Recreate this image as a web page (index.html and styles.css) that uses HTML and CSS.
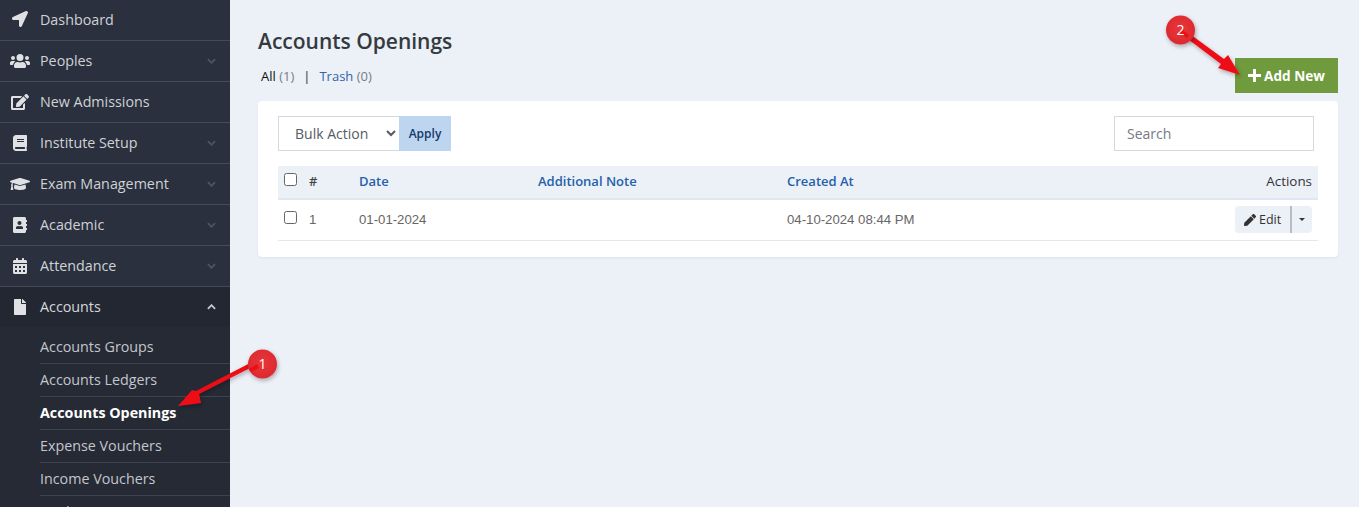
FILE: index.html
```html
<!DOCTYPE html>
<html lang="en">
<head>
<meta charset="utf-8">
<title>Accounts Openings</title>
<link rel="stylesheet" href="styles.css">
</head>
<body>
<div class="app">
  <aside class="sidebar">
    <a class="nav-item"><svg class="ico" viewBox="0 0 512 512"><path d="M444.52 3.52 28.74 195.42c-47.97 22.39-31.98 92.75 19.19 92.75h175.91v175.91c0 51.17 70.36 67.17 92.75 19.19l191.9-415.78c15.99-38.39-25.59-79.97-63.97-63.97z"/></svg><span class="nav-label">Dashboard</span></a>
    <a class="nav-item"><svg class="ico ico-wide" viewBox="0 0 640 512"><path d="M96 224a64 64 0 1 0 0-128 64 64 0 0 0 0 128zm448 0a64 64 0 1 0 0-128 64 64 0 0 0 0 128zm32 32h-64c-17.600 0-33.500 7.100-45.100 18.600 40.300 22.100 68.900 62 75.100 109.400h66c17.700 0 32-14.300 32-32v-32c0-35.300-28.700-64-64-64zm-256 0a112 112 0 1 0 0-224 112 112 0 0 0 0 224zm76.800 32h-8.300c-20.800 10-43.900 16-68.500 16s-47.600-6-68.500-16h-8.300C179.600 288 128 339.600 128 403.200V432c0 26.500 21.500 48 48 48h288c26.500 0 48-21.500 48-48v-28.800c0-63.600-51.600-115.200-115.200-115.200zm-223.700-13.400C161.500 263.100 145.600 256 128 256H64c-35.300 0-64 28.700-64 64v32c0 17.700 14.300 32 32 32h65.900c6.300-47.400 34.900-87.300 75.200-109.400z"/></svg><span class="nav-label">Peoples</span><svg class="chev" viewBox="0 0 10 6"><path d="M1 1l4 4 4-4"/></svg></a>
    <a class="nav-item"><svg class="ico ico-wide" viewBox="0 0 576 512"><path d="m402.600 83.200 90.200 90.200c3.800 3.800 3.800 10 0 13.800L274.400 405.600l-92.800 10.300c-12.400 1.400-22.900-9.100-21.500-21.500l10.300-92.800L388.800 83.200c3.800-3.800 10-3.800 13.800 0zm162-22.900-48.800-48.800c-15.200-15.200-39.900-15.200-55.200 0l-35.400 35.400c-3.800 3.800-3.800 10 0 13.800l90.200 90.200c3.800 3.800 10 3.800 13.800 0l35.400-35.400c15.200-15.300 15.200-40 0-55.200zM384 346.200V448H64V128h229.800c3.200 0 6.200-1.300 8.500-3.500l40-40c7.600-7.600 2.200-20.500-8.500-20.500H48C21.500 64 0 85.500 0 112v352c0 26.500 21.500 48 48 48h352c26.500 0 48-21.500 48-48V306.200c0-10.700-12.900-16-20.500-8.500l-40 40c-2.200 2.300-3.500 5.300-3.500 8.500z"/></svg><span class="nav-label">New Admissions</span></a>
    <a class="nav-item"><svg class="ico" viewBox="0 0 448 512"><path d="M448 360V24c0-13.300-10.700-24-24-24H96C43 0 0 43 0 96v320c0 53 43 96 96 96h328c13.300 0 24-10.700 24-24v-16c0-7.500-3.500-14.300-8.900-18.700-4.200-15.400-4.200-59.300 0-74.700 5.400-4.300 8.900-11.100 8.900-18.600zM128 134c0-3.300 2.700-6 6-6h212c3.300 0 6 2.700 6 6v20c0 3.300-2.700 6-6 6H134c-3.300 0-6-2.700-6-6v-20zm0 64c0-3.300 2.700-6 6-6h212c3.300 0 6 2.700 6 6v20c0 3.300-2.700 6-6 6H134c-3.300 0-6-2.700-6-6v-20zm253.400 250H96c-17.700 0-32-14.300-32-32 0-17.600 14.400-32 32-32h285.400c-1.900 17.100-1.900 46.900 0 64z"/></svg><span class="nav-label">Institute Setup</span><svg class="chev" viewBox="0 0 10 6"><path d="M1 1l4 4 4-4"/></svg></a>
    <a class="nav-item"><svg class="ico ico-wide" viewBox="0 0 640 512"><path d="M622.340 153.200 343.400 67.500c-15.200-4.670-31.600-4.670-46.790 0L17.660 153.200c-23.540 7.230-23.540 38.360 0 45.590l48.630 14.940c-10.670 13.190-17.230 29.280-17.880 46.900C38.780 266.150 32 276.110 32 288c0 10.780 5.680 19.850 13.860 25.650L20.330 428.530C18.110 438.520 25.710 448 35.940 448h56.110c10.240 0 17.840-9.480 15.620-19.470L82.140 313.650C90.320 307.850 96 298.780 96 288c0-11.570-6.470-21.250-15.660-26.870.76-15.020 8.440-28.300 20.690-36.720L296.600 284.500c9.060 2.780 26.440 6.250 46.790 0l278.950-85.700c23.550-7.240 23.550-38.370 0-45.600zM352.790 315.090c-28.530 8.760-52.840 3.920-65.590 0l-145.020-44.550L128 384c0 35.350 85.960 64 192 64s192-28.650 192-64l-14.180-113.470-145.030 44.560z"/></svg><span class="nav-label">Exam Management</span><svg class="chev" viewBox="0 0 10 6"><path d="M1 1l4 4 4-4"/></svg></a>
    <a class="nav-item"><svg class="ico" viewBox="0 0 448 512"><path d="M436 160c6.600 0 12-5.400 12-12v-40c0-6.600-5.400-12-12-12h-20V48c0-26.500-21.500-48-48-48H48C21.500 0 0 21.500 0 48v416c0 26.500 21.500 48 48 48h320c26.500 0 48-21.500 48-48v-48h20c6.600 0 12-5.400 12-12v-40c0-6.600-5.400-12-12-12h-20v-64h20c6.600 0 12-5.400 12-12v-40c0-6.600-5.400-12-12-12h-20v-64h20zm-228-32c35.300 0 64 28.700 64 64s-28.700 64-64 64-64-28.700-64-64 28.700-64 64-64zm112 236.800c0 10.600-10 19.200-22.400 19.200H118.400C106 384 96 375.400 96 364.800v-19.200c0-31.800 30.100-57.600 67.200-57.600h5c12.300 5.100 25.700 8 39.800 8s27.600-2.900 39.800-8h5c37.100 0 67.200 25.800 67.200 57.600v19.200z"/></svg><span class="nav-label">Academic</span><svg class="chev" viewBox="0 0 10 6"><path d="M1 1l4 4 4-4"/></svg></a>
    <a class="nav-item"><svg class="ico" viewBox="0 0 448 512"><path d="M0 464c0 26.500 21.500 48 48 48h352c26.500 0 48-21.500 48-48V192H0v272zm320-196c0-6.600 5.400-12 12-12h40c6.600 0 12 5.400 12 12v40c0 6.600-5.400 12-12 12h-40c-6.600 0-12-5.400-12-12v-40zm0 128c0-6.600 5.400-12 12-12h40c6.600 0 12 5.400 12 12v40c0 6.600-5.400 12-12 12h-40c-6.600 0-12-5.400-12-12v-40zM192 268c0-6.600 5.400-12 12-12h40c6.600 0 12 5.400 12 12v40c0 6.600-5.400 12-12 12h-40c-6.600 0-12-5.400-12-12v-40zm0 128c0-6.600 5.400-12 12-12h40c6.600 0 12 5.400 12 12v40c0 6.600-5.400 12-12 12h-40c-6.600 0-12-5.400-12-12v-40zM64 268c0-6.600 5.400-12 12-12h40c6.600 0 12 5.400 12 12v40c0 6.600-5.400 12-12 12H76c-6.600 0-12-5.400-12-12v-40zm0 128c0-6.600 5.400-12 12-12h40c6.600 0 12 5.400 12 12v40c0 6.600-5.400 12-12 12H76c-6.600 0-12-5.400-12-12v-40zM400 64h-48V16c0-8.800-7.200-16-16-16h-32c-8.800 0-16 7.200-16 16v48H160V16c0-8.800-7.200-16-16-16h-32c-8.800 0-16 7.200-16 16v48H48C21.500 64 0 85.500 0 112v48h448v-48c0-26.500-21.500-48-48-48z"/></svg><span class="nav-label">Attendance</span><svg class="chev" viewBox="0 0 10 6"><path d="M1 1l4 4 4-4"/></svg></a>
    <a class="nav-item nav-open"><svg class="ico" viewBox="0 0 384 512"><path d="M224 136V0H24C10.700 0 0 10.700 0 24v464c0 13.300 10.700 24 24 24h336c13.300 0 24-10.700 24-24V160H248c-13.200 0-24-10.800-24-24zm160-14.100v6.100H256V0h6.100c6.400 0 12.500 2.500 17 7l97.900 98c4.500 4.500 7 10.600 7 16.900z"/></svg><span class="nav-label">Accounts</span><svg class="chev" viewBox="0 0 10 6"><path d="M1 5l4-4 4 4"/></svg></a>
    <div class="submenu">
      <a class="sub-item">Accounts Groups</a>
      <a class="sub-item">Accounts Ledgers</a>
      <a class="sub-item sub-active">Accounts Openings</a>
      <a class="sub-item">Expense Vouchers</a>
      <a class="sub-item">Income Vouchers</a>
      <a class="sub-item">Bank Payments</a>
    </div>
  </aside>
  <main class="content">
    <div class="page-head">
      <div>
        <h1 class="title">Accounts Openings</h1>
        <div class="filters"><span class="f-all">All</span> <span class="count">(1)</span><span class="pipe">|</span><a class="link">Trash</a> <span class="count">(0)</span></div>
      </div>
      <a class="add-btn"><svg class="plus" viewBox="0 0 13 13"><path d="M6.500 0v13M0 6.500h13"/></svg>Add New</a>
    </div>
    <section class="card">
      <div class="toolbar">
        <div class="bulk">
          <select class="bulk-select"><option>Bulk Action</option></select>
          <button class="apply">Apply</button>
        </div>
        <input class="search" placeholder="Search">
      </div>
      <table class="table">
        <thead>
          <tr>
            <th class="c-check"><span class="check"></span></th>
            <th class="c-num">#</th>
            <th class="c-date th-link">Date</th>
            <th class="c-note th-link">Additional Note</th>
            <th class="c-created th-link">Created At</th>
            <th class="c-actions">Actions</th>
          </tr>
        </thead>
        <tbody>
          <tr>
            <td><span class="check"></span></td>
            <td>1</td>
            <td>01-01-2024</td>
            <td></td>
            <td>04-10-2024 08:44 PM</td>
            <td class="c-actions">
              <span class="btn-group"><span class="btn-edit"><svg class="pencil" viewBox="0 0 512 512"><path d="M290.740 93.240l128.020 128.020-277.990 277.990-114.140 12.600C11.350 513.540-1.560 500.620.14 485.340l12.700-114.220 277.900-277.880zm207.200-19.060l-60.110-60.110c-18.750-18.750-49.160-18.750-67.910 0l-56.550 56.550 128.020 128.020 56.550-56.550c18.750-18.760 18.750-49.160 0-67.910z"/></svg>Edit</span><span class="btn-caret"><i class="caret"></i></span></span>
            </td>
          </tr>
        </tbody>
      </table>
    </section>
  </main>
</div>
<svg class="annot" viewBox="0 0 1359 507" width="1359" height="507">
  <defs>
    <radialGradient id="bad" cx="50%" cy="45%" r="55%"><stop offset="0" stop-color="#e9343a"/><stop offset="1" stop-color="#dc2a30"/></radialGradient>
    <filter id="sh" x="-40%" y="-40%" width="180%" height="180%"><feDropShadow dx="1" dy="2" stdDeviation="2" flood-color="#000" flood-opacity=".3"/></filter>
  </defs>
  <g filter="url(#sh)">
    <path d="M256 365 L199 394 L201 403 L178 406 L192 390 L196 391 L254 361Z" fill="#ec0f13"/>
    <path d="M1183 29 L1224 59 L1228 55 L1240 75 L1218 68 L1221 64 L1180 33Z" fill="#ec0f13"/>
  </g>
  <circle cx="262.500" cy="364" r="14.500" fill="url(#bad)" filter="url(#sh)"/>
  <circle cx="1180.500" cy="30" r="14.500" fill="url(#bad)" filter="url(#sh)"/>
  <path d="M257 364 L249 369 L251 372 L259 368Z" fill="#ec0f13"/>
  <path d="M1183 30 L1189 35 L1187 38 L1180 33Z" fill="#ec0f13"/>
  <text class="badge-num" x="262.500" y="369">1</text>
  <text class="badge-num" x="1180.500" y="35">2</text>
</svg>
</body>
</html>
```
FILE: styles.css
```css
* { box-sizing: border-box; }
html, body { margin: 0; height: 100%; overflow: hidden; }
body { position: relative; background: #ecf0f7; font-family: "Open Sans", sans-serif; font-size: 14px; color: #333; }
a { text-decoration: none; }
.app { display: flex; height: 507px; overflow: hidden; }

.sidebar { width: 230px; flex: none; background: #2a303d; height: 507px; overflow: hidden; }
.nav-item { display: flex; align-items: center; height: 41px; padding: 0 14px 1px 10px; border-bottom: 1px solid #444a57; color: #cfd2d6; font-size: 14.300px; }
.nav-item:first-child { padding-bottom: 2px; }
.nav-open { background: #232732; border-bottom: 0; height: 40px; color: #d5d7db; }
.ico { width: 20px; height: 16px; fill: #dfe1e4; flex: none; margin-right: 10px; }
.nav-label { flex: 1; }
.chev { width: 9px; height: 6px; fill: none; stroke: #4e5461; stroke-width: 2; flex: none; }
.nav-open .chev { stroke: #c8cbd0; }
.submenu { background: #262a35; padding: 4px 0 0 40px; }
.sub-item { display: block; height: 33px; line-height: 32px; border-bottom: 1px solid #3e434f; color: #c3c6cb; font-size: 14.300px; }
.sub-active { color: #fff; font-weight: 700; }

.content { flex: 1; min-width: 0; padding: 0 21px 0 28px; }
.page-head { display: flex; justify-content: space-between; align-items: flex-end; height: 93px; }
.title { margin: 0; font-size: 21px; font-weight: 600; line-height: 28px; color: #343a40; }
.filters { margin-top: 13px; margin-bottom: 8px; font-size: 13px; line-height: 17px; color: #777d85; padding-left: 3px; }
.f-all { color: #111; }
.count { color: #777d85; }
.pipe { color: #555; font-weight: 600; margin: 0 9px 0 9px; }
.link { color: #3164a8; }
.add-btn { display: flex; align-items: center; justify-content: center; width: 103px; height: 35px; background: #6f9a3d; color: #fff; font-size: 13.600px; font-weight: 700; }
.plus { width: 13px; height: 13px; fill: none; stroke: #fff; stroke-width: 3; margin-right: 3px; }

.card { margin-top: 8px; background: #fff; border-radius: 4px; padding: 15px 20px 16px; height: 156px; box-shadow: 0 1px 2px rgba(60,70,90,.08); }
.toolbar { display: flex; justify-content: space-between; align-items: flex-start; padding-right: 4px; }
.bulk { display: flex; }
.bulk-select { width: 121px; height: 35px; border: 1px solid #d4d8e0; border-right: 0; background: #fff; border-radius: 0; padding: 0 8px 0 12px; font-family: inherit; font-size: 14px; color: #555b62; }
.apply { width: 52px; height: 35px; border: 0; background: #bed5f0; color: #123a6d; font-family: inherit; font-size: 12px; font-weight: 600; padding: 0; }
.search { width: 200px; height: 35px; border: 1px solid #d4d8e0; padding: 0 12px; font-family: inherit; font-size: 14px; outline: 0; }
.search::placeholder { color: #747a82; }

.table { width: 100%; border-collapse: collapse; margin-top: 15px; table-layout: fixed; font-family: "Liberation Sans", sans-serif; font-size: 13.200px; }
.table th { height: 33px; background: #ecf0f7; border-bottom: 2px solid #e2e6ee; font-family: "Open Sans", sans-serif; font-size: 13px; font-weight: 600; text-align: left; padding: 0 6px 2px; color: #444; }
.table td { height: 41px; border-bottom: 1px solid #e3e6ec; padding: 0 6px; color: #666; }
.table .th-link { color: #2561ab; }
.c-check { width: 25px; }
.c-num { width: 50px; }
.c-date { width: 179px; }
.c-note { width: 249px; }
.c-created { width: 250px; }
.table .c-actions { text-align: right; font-family: "Open Sans", sans-serif; font-weight: 400; font-size: 13.400px; color: #333; }
.check { display: block; width: 13px; height: 13px; border: 1px solid #666; border-radius: 2.500px; background: #fff; margin-top: -4px; }
.btn-group { display: inline-flex; height: 27px; border-radius: 4px; background: #ecf0f7; overflow: hidden; font-size: 12.500px; color: #333; vertical-align: middle; }
.btn-edit { display: flex; align-items: center; padding: 0 9px; border-right: 2px solid #b9bcc2; width: 57px; }
.pencil { width: 12px; height: 12px; fill: #333; margin-right: 3px; flex: none; }
.btn-caret { display: flex; align-items: center; justify-content: center; width: 20px; }
.caret { width: 0; height: 0; border-top: 3px solid #333; border-left: 3px solid transparent; border-right: 3px solid transparent; }

.annot { position: absolute; left: 0; top: 0; pointer-events: none; }
.badge-num { fill: #fff; font-family: "Open Sans", sans-serif; font-size: 14px; text-anchor: middle; }
```
